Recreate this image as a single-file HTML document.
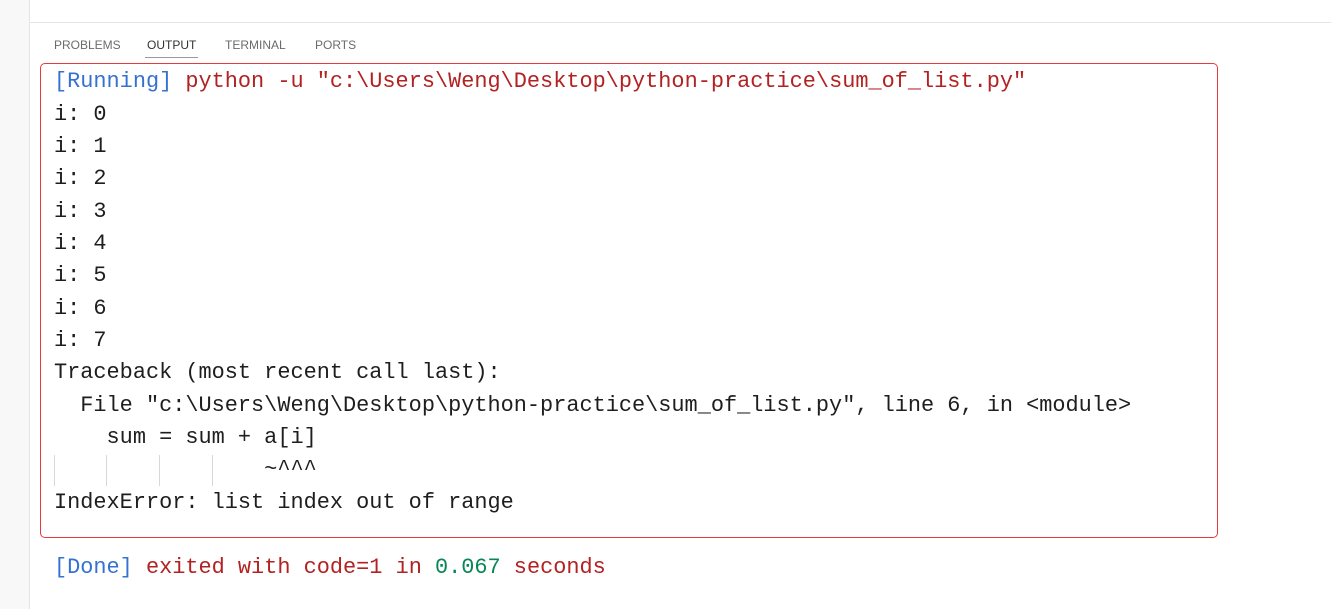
<!DOCTYPE html>
<html><head><style>
body{margin:0;width:1331px;height:609px;background:#fff;position:relative;overflow:hidden;font-family:"Liberation Sans",sans-serif}
.left{position:absolute;left:0;top:0;width:29px;height:609px;background:#f8f8f8;border-right:1px solid #e5e5e5}
.hl{position:absolute;left:30px;top:22px;width:1301px;height:1px;background:#e5e5e5}
.tab{position:absolute;top:38px;font-size:12px;color:#6b6b6b}
.box{position:absolute;left:40px;top:63px;width:1176px;height:473px;border:1.5px solid #e8393e;border-radius:5px}
.t{position:absolute;left:54px;font-family:"Liberation Mono",monospace;font-size:21.9px;line-height:32px;white-space:pre;color:#1e1e1e}
.b{color:#3572d0}.r{color:#b22222}.g{color:#098658}
.g1{position:absolute;top:455px;width:1px;height:31px;background:#d8d8d8}
</style></head><body>
<div class="left"></div><div class="hl"></div>
<div class="tab" style="left:54px">PROBLEMS</div>
<div class="tab" style="left:147px;color:#333">OUTPUT</div>
<div style="position:absolute;left:145px;top:57px;width:53px;height:1px;background:#999"></div>
<div class="tab" style="left:225px">TERMINAL</div>
<div class="tab" style="left:315px">PORTS</div>
<div class="box"></div>
<div class="t" style="top:66px"><span class="b">[Running]</span> <span class="r">python -u "c:\Users\Weng\Desktop\python-practice\sum_of_list.py"</span></div>
<div class="t" style="top:99px">i: 0</div>
<div class="t" style="top:131px">i: 1</div>
<div class="t" style="top:163px">i: 2</div>
<div class="t" style="top:196px">i: 3</div>
<div class="t" style="top:228px">i: 4</div>
<div class="t" style="top:260px">i: 5</div>
<div class="t" style="top:293px">i: 6</div>
<div class="t" style="top:325px">i: 7</div>
<div class="t" style="top:357px">Traceback (most recent call last):</div>
<div class="t" style="top:390px">  File "c:\Users\Weng\Desktop\python-practice\sum_of_list.py", line 6, in &lt;module&gt;</div>
<div class="t" style="top:422px">    sum = sum + a[i]</div>
<div class="t" style="top:454px">                ~^^^</div>
<div class="g1" style="left:54px"></div><div class="g1" style="left:106px"></div><div class="g1" style="left:159px"></div><div class="g1" style="left:212px"></div>
<div class="t" style="top:487px">IndexError: list index out of range</div>
<div class="t" style="top:552px"><span class="b">[Done]</span> <span class="r">exited with code=1 in </span><span class="g">0.067</span><span class="r"> seconds</span></div>
</body></html>
